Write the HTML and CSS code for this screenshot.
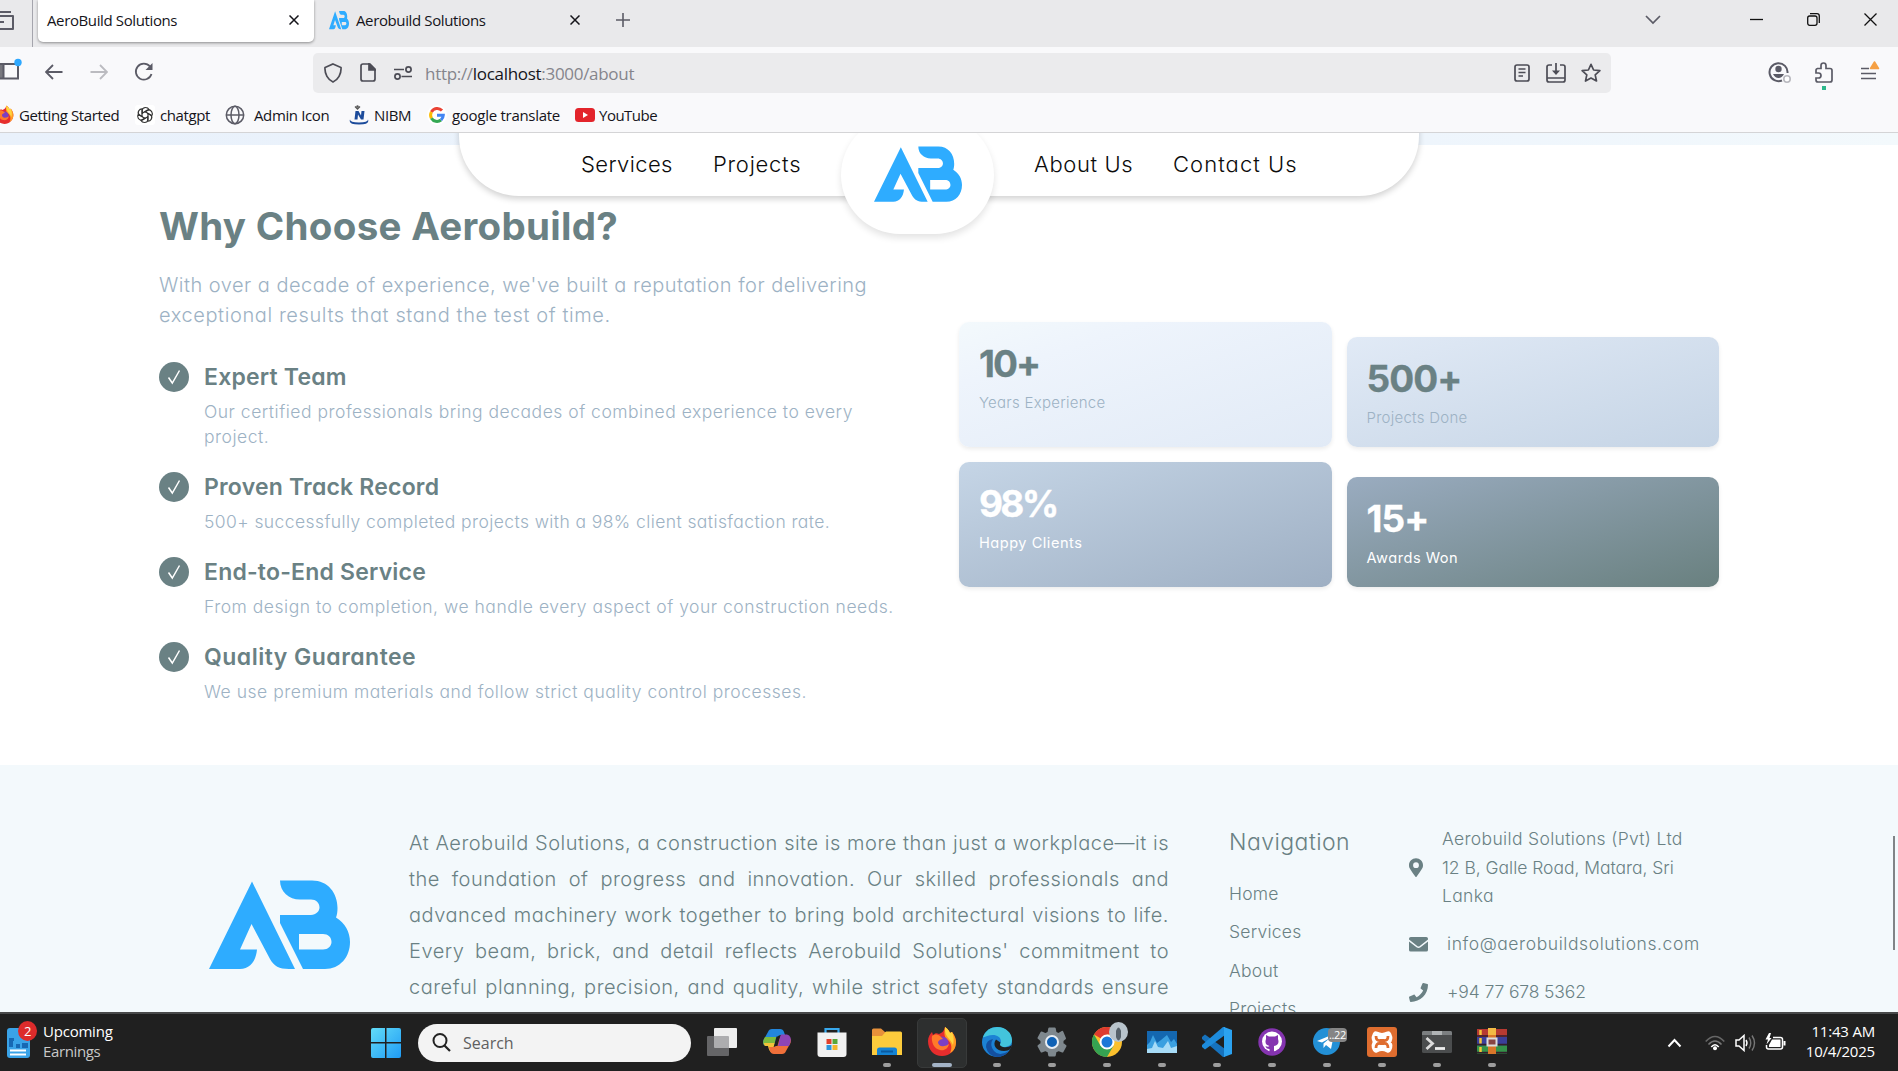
FILE: index.html
```html
<!DOCTYPE html>
<html lang="en">
<head>
<meta charset="utf-8">
<title>AeroBuild Solutions</title>
<link rel="stylesheet" href="styles.css">
</head>
<body>
<svg class="defs" aria-hidden="true">
  <symbol id="logo" viewBox="0 0 141 89"><path fill="#2eacff" fill-rule="evenodd" d="M43 1.5 86 89H80C70 89 65 86 61 79L42.5 44 31 69.5H48C47 81 41 89 31 89H0ZM71 .5H103C119 .5 128.5 13 128.5 28 128.5 32 128 35 127 37.5 136 43 141 52 141 62 141 77 131 89 116 89H94L71 43V35H102C107 35 110.500 31 110.500 27.500 110.500 23 107 19.500 102 19.500H91C80 19.500 71 12 71 .5ZM90 54V69.500H114C119 69.500 122.500 66 122.500 62 122.500 57 119 54 114 54Z"/></symbol>
  <symbol id="check" viewBox="0 0 30 30"><path d="M9.500 15.500 13.300 21 20.500 8.500" fill="none" stroke="#fff" stroke-width="1.500"/></symbol>
  <symbol id="firefox" viewBox="0 0 30 30">
    <path fill="#e62d2d" d="M1 14C1 10 3 7 5 5l1 3C8 6 10 6 12 7c3-1 5-3 6-7 3 2 4 4 5 6l2-1c3 4 4 7 4 10 0 8-6 14-14 14S1 23 1 14Z"/>
    <path fill="#ff9b24" d="M18 0c3 2 4 4 5 6l2-1c3 4 4 7 4 10 0 5-2 9-6 11 2-4 2-8-1-12-3-3-6-4-4-14Z"/>
    <path fill="#ffd53f" d="M18 0c3 2 4 4 5 6l2-1c2 4 2 9 1 13-2-6-9-8-8-18Z"/>
    <circle cx="15" cy="16" r="6.500" fill="#7c3fc2"/>
    <path fill="#ff7a2a" d="M5 9c3-2 5-2 8 0l3 3c-2 0-4 1-5 3 0 3 3 5 6 4 2 0 3-1 5-2-1 5-5 7-9 6-6-1-9-8-8-14Z"/>
  </symbol>
</svg>

<header class="browser">
  <div class="tabs">
    <span class="recent"><svg width="15" height="22" viewBox="0 0 15 22"><path d="M0 3H12M0 7H14V20H0M0 13H5" fill="none" stroke="#5b5b66" stroke-width="2" stroke-linejoin="round"/></svg></span>
    <div class="tab active"><span>AeroBuild Solutions</span><svg class="x" viewBox="0 0 10 10"><path d="M.5.5 9.500 9.500M9.500.5.5 9.500"/></svg></div>
    <div class="tab"><svg class="fav"><use href="#logo"/></svg><span>Aerobuild Solutions</span><svg class="x" viewBox="0 0 10 10"><path d="M.5.5 9.500 9.500M9.500.5.5 9.500"/></svg></div>
    <svg class="plus" width="14" height="14"><path d="M7 0V14M0 7H14" stroke="#5b5b66" stroke-width="1.600"/></svg>
    <div class="winctl">
      <svg width="16" height="10" viewBox="0 0 16 10"><path d="M1 1 8 8 15 1" fill="none" stroke="#5b5b66" stroke-width="1.700"/></svg>
      <svg width="13" height="13"><path d="M0 6.500H13" stroke="#111" stroke-width="1.300"/></svg>
      <svg width="13" height="13"><path d="M3 .7H10Q12.300.7 12.300 3V10" fill="none" stroke="#111" stroke-width="1.300"/><rect x=".7" y="3" width="9.300" height="9.300" rx="2" fill="none" stroke="#111" stroke-width="1.300"/></svg>
      <svg width="13" height="13"><path d="M.5.5 12.500 12.500M12.500.5.5 12.500" stroke="#111" stroke-width="1.300"/></svg>
    </div>
  </div>

  <div class="toolbar">
    <svg class="side" width="22" height="24" viewBox="0 0 22 24"><path d="M0 6H3.500V21H0Z" fill="#77777e"/><path d="M0 6H18V20.500H0M3.500 6V20" fill="none" stroke="#5b5b66" stroke-width="2"/><circle cx="18" cy="4.500" r="3.700" fill="#2ea8ff"/></svg>
    <svg class="back" width="18" height="16" viewBox="0 0 18 16"><path d="M17.500 8H1.500M8 1 1 8 8 15" fill="none" stroke="#5b5b66" stroke-width="1.800"/></svg>
    <svg class="fwd" width="18" height="16" viewBox="0 0 18 16"><path d="M.5 8H16.500M10 1 17 8 10 15" fill="none" stroke="#bbbbc0" stroke-width="1.800"/></svg>
    <svg class="reload" width="20" height="20" viewBox="0 0 20 20"><path d="M17.500 12A8 8 0 1 1 16 4.500" fill="none" stroke="#5b5b66" stroke-width="1.800"/><path d="M18.500 1V8H11.500Z" fill="#5b5b66"/></svg>
    <div class="urlbar">
      <svg class="shield" width="18" height="20" viewBox="0 0 18 20"><path d="M9 1 17 4.500C17.500 11 14 17 9 19 4 17 .5 11 1 4.500Z"/></svg>
      <svg class="page" width="16" height="19" viewBox="0 0 16 19"><path d="M3 1H10L15 6V16Q15 18 13 18H3Q1 18 1 16V3Q1 1 3 1Z"/><path d="M9 1V7H15Z" fill="#4c4c55"/></svg>
      <svg class="perm" width="18" height="14" viewBox="0 0 18 14"><path d="M0 3.500H10M7.500 10.500H18"/><circle cx="14.500" cy="3.500" r="2.600"/><circle cx="3.500" cy="10.500" r="2.600"/></svg>
      <span class="url">http://<b>localhost</b>:3000/about</span>
      <svg class="reader" width="16" height="18" viewBox="0 0 16 18"><rect x="1" y="1" width="14" height="16" rx="2"/><path d="M4.500 5H11.500M4.500 8.500H11.500M4.500 12H9"/></svg>
      <svg class="save" width="20" height="20" viewBox="0 0 20 20"><path d="M6 2H3Q1 2 1 4V17Q1 19 3 19H17Q19 19 19 17V4Q19 2 17 2H14M1 15H19M10 0V10"/><path d="M6 7.500 10 12 14 7.500Z" fill="#4c4c55" stroke="none"/></svg>
      <svg class="star" width="20" height="20" viewBox="0 0 20 20"><path d="M10 1.300 12.600 7 18.900 7.700 14.200 11.800 15.500 18 10 15 4.500 18 5.800 11.800 1.100 7.700 7.400 7Z" stroke-linejoin="round"/></svg>
    </div>
    <svg class="acct" width="24" height="22" viewBox="0 0 24 22"><path d="M19.500 12A9 9 0 1 0 14 19.500" fill="none" stroke="#5b5b66" stroke-width="2"/><circle cx="10.500" cy="8" r="3.200" fill="#5b5b66"/><path d="M5 13H16Q14 17 10.500 17T5 13Z" fill="#5b5b66"/><circle cx="19" cy="18" r="3.200" fill="#fff" stroke="#b9b9bf" stroke-width="1.600"/></svg>
    <svg class="ext" width="18" height="28" viewBox="0 0 18 28"><path d="M2 6.500H6V3.500Q6 1 8.500 1T11 3.500V6.500H15Q17 6.500 17 8.500V18Q17 20 15 20H3Q1 20 1 18V16H3.500Q6 16 6 13.500T3.500 11H1V8.500Q1 6.500 3 6.500Z" fill="none" stroke="#5b5b66" stroke-width="1.700"/><rect x="7" y="24" width="4" height="4" fill="#2fb88c"/></svg>
    <svg class="menu" width="20" height="20" viewBox="0 0 20 20"><path d="M1 7.500H9M1 12.500H16M1 17.500H16" stroke="#5b5b66" stroke-width="1.600"/><path d="M14.500 1 18.500 7.500H10.500Z" fill="#f5a044" stroke="#f5a044" stroke-width="1.500" stroke-linejoin="round"/></svg>
  </div>

  <nav class="bookmarks">
    <svg class="bi b1" viewBox="8 0 22 30"><use href="#firefox" width="30" height="30"/></svg><span class="t1">Getting Started</span>
    <svg class="bi b2" viewBox="0 0 20 20"><rect width="20" height="20" rx="3" fill="#fff"/><g fill="none" stroke="#333" stroke-width="1.200"><path id="petal" d="M7 11.500V5.500Q7.500 2.500 10.500 2.500 13 2.500 14 4.500L9.500 7.200"/><use href="#petal" transform="rotate(60 10 10)"/><use href="#petal" transform="rotate(120 10 10)"/><use href="#petal" transform="rotate(180 10 10)"/><use href="#petal" transform="rotate(240 10 10)"/><use href="#petal" transform="rotate(300 10 10)"/></g></svg><span class="t2">chatgpt</span>
    <svg class="bi b3" viewBox="0 0 20 20"><g fill="none" stroke="#5b5b66" stroke-width="1.500"><circle cx="10" cy="10" r="8.700"/><ellipse cx="10" cy="10" rx="4" ry="8.700"/><path d="M1 10H19"/></g></svg><span class="t3">Admin Icon</span>
    <svg class="bi b4" viewBox="0 0 20 20"><path d="M5.500 14.500 6.500 6H9.500L12 10.500 12.500 6H15.500L14.500 14.500H12L9 9.500 8.500 14.500Z" fill="#1c4b9b"/><path d="M1 14.500Q-1 19.500 10 19.500T19 14.500Q19 17.500 10 17.500T1 14.500Z" fill="#1c4b9b"/><path d="M6 1.500 8.500 4 11 1.500" fill="none" stroke="#555" stroke-width="1.300"/><circle cx="8.500" cy="1.500" r="1.200" fill="#555"/></svg><span class="t4">NIBM</span>
    <svg class="bi b5" viewBox="0 0 20 20"><circle cx="10" cy="10" r="10" fill="#fff"/><g fill="none" stroke-width="3"><path d="M15 5.500A6.500 6.500 0 0 0 4.400 7" stroke="#ea4335"/><path d="M4.400 7A6.500 6.500 0 0 0 4.400 13.200" stroke="#fbbc05"/><path d="M4.400 13.200A6.500 6.500 0 0 0 14 15" stroke="#34a853"/><path d="M14 15A6.500 6.500 0 0 0 16.300 10.300H10" stroke="#4285f4"/></g></svg><span class="t5">google translate</span>
    <svg class="bi b6" viewBox="0 0 20 20"><rect y="3" width="20" height="14" rx="3.500" fill="#e3242b"/><path d="M8 7V13L13 10Z" fill="#fff"/></svg><span class="t6">YouTube</span>
  </nav>
</header>

<main class="viewport">
  <div class="sitenav">
    <div class="bar"><a class="n1">Services</a><a class="n2">Projects</a><a class="n3">About Us</a><a class="n4">Contact Us</a></div>
    <div class="badge"><svg width="88" height="56"><use href="#logo"/></svg></div>
  </div>
  <div class="scroll"></div>
  <div class="strip"></div>

  <section class="why">
    <div class="left">
      <h2>Why Choose Aerobuild?</h2>
      <p class="lead">With over a decade of experience, we've built a reputation for delivering<br><span>exceptional results that stand the test of time.</span></p>
      <ul>
        <li><svg><use href="#check"/></svg><div><h3>Expert Team</h3><p>Our certified professionals bring decades of combined experience to every<br>project.</p></div></li>
        <li><svg><use href="#check"/></svg><div><h3>Proven Track Record</h3><p class="p2">500+ successfully completed projects with a 98% client satisfaction rate.</p></div></li>
        <li><svg><use href="#check"/></svg><div><h3>End-to-End Service</h3><p>From design to completion, we handle every aspect of your construction needs.</p></div></li>
        <li><svg><use href="#check"/></svg><div><h3 class="h4">Quality Guarantee</h3><p class="p4">We use premium materials and follow strict quality control processes.</p></div></li>
      </ul>
    </div>
    <div class="stats">
      <div class="stat s1"><strong>10+</strong><span>Years Experience</span></div>
      <div class="stat s2"><strong>500+</strong><span>Projects Done</span></div>
      <div class="stat s3"><strong>98%</strong><span>Happy Clients</span></div>
      <div class="stat s4"><strong>15+</strong><span>Awards Won</span></div>
    </div>
  </section>

  <footer>
    <svg class="flogo" width="141" height="89"><use href="#logo"/></svg>
    <p class="about">At Aerobuild Solutions, a construction site is more than just a workplace—it is<br>the foundation of progress and innovation. Our skilled professionals and<br>advanced machinery work together to bring bold architectural visions to life.<br>Every beam, brick, and detail reflects Aerobuild Solutions' commitment to<br>careful planning, precision, and quality, while strict safety standards ensure</p>
    <div class="links"><h4>Navigation</h4><a>Home</a><a>Services</a><a>About</a><a>Projects</a></div>
    <div class="contact">
      <div class="row addr"><svg width="14" height="19" viewBox="0 0 384 512"><path d="M172.300 501.700C27 291 0 269.400 0 192 0 86 86 0 192 0s192 86 192 192c0 77.400-27 99-172.300 309.700a24 24 0 0 1-39.400 0ZM192 272a80 80 0 1 0 0-160 80 80 0 0 0 0 160Z"/></svg><span>Aerobuild Solutions (Pvt) Ltd<br><em>12 B, Galle Road, Matara, Sri</em><br>Lanka</span></div>
      <div class="row mail"><svg width="19" height="15" viewBox="0 0 19 15"><path d="M1.800 0H17.200Q19 0 19 1.800V2.500L10.800 9Q9.500 10 8.200 9L0 2.500V1.800Q0 0 1.800 0ZM0 4.500 7.500 10.300Q9.500 11.800 11.500 10.300L19 4.500V13Q19 14.500 17.200 14.500H1.800Q0 14.500 0 13Z"/></svg><span>info@aerobuildsolutions.com</span></div>
      <div class="row tel"><svg width="19" height="19" viewBox="0 0 512 512"><path d="m493.400 24.600-104-24c-11.300-2.600-22.900 3.300-27.500 13.900l-48 112c-4.200 9.800-1.400 21.300 6.900 28l60.600 49.600c-36 76.700-98.900 140.500-177.200 177.200l-49.600-60.600c-6.800-8.300-18.200-11.100-28-6.900l-112 48C3.900 366.500-2 378.100.6 389.400l24 104C27.100 504.200 36.700 512 48 512c256.100 0 464-207.500 464-464 0-11.200-7.700-20.900-18.600-23.400Z"/></svg><span>+94 77 678 5362</span></div>
    </div>
  </footer>
</main>

<div class="taskbar">
  <div class="widget">
    <svg width="24" height="38" viewBox="0 0 24 38"><rect y="4" width="23" height="30" rx="3" fill="#3aa3e8"/><path d="M2 17h4v6H2Zm7 3h4v4H9Zm6-1h6v5h-6ZM2 14h5v3H2Z" fill="#1768b3"/><path d="M3 26.500H19M3 30.500H19" stroke="#fff" stroke-width="2.200"/></svg>
    <i>2</i>
    <div><b>Upcoming</b><span>Earnings</span></div>
  </div>
  <svg class="win" width="30" height="30" viewBox="0 0 30 30"><defs><linearGradient id="w" x2="1" y2="1"><stop stop-color="#62dcf8"/><stop offset="1" stop-color="#1f9bf5"/></linearGradient></defs><path fill="url(#w)" d="M2 0H14V14H0V2Q0 0 2 0ZM15.500 0H28Q30 0 30 2V14H15.500ZM0 15.500H14V30H2Q0 30 0 28ZM15.500 15.500H30V28Q30 30 28 30H15.500Z"/></svg>
  <div class="search"><svg width="19" height="19" viewBox="0 0 19 19"><circle cx="8" cy="7.500" r="6.500" fill="none" stroke="#222" stroke-width="2"/><path d="M12.500 12.500 18 18" stroke="#222" stroke-width="2.200"/></svg><span>Search</span></div>

  <div class="apps">
    <div class="app"><svg viewBox="0 0 30 30"><rect x="7" y="1" width="23" height="20" rx="1" fill="#eee"/><rect y="9" width="22" height="20" rx="1" fill="#8a8a8e" fill-opacity=".65"/></svg></div>
    <div class="app"><svg viewBox="0 0 30 30"><path d="M6 5Q7 2 10 2H18Q21 2 22 5L23 8H19Q16 8 15 11L12 19H4Q0 18 1.500 13Z" fill="#2386dc"/><path d="M3 10H14.500L12 19H4Q0 18 1.500 13Z" fill="#7cbb3e"/><path d="M2 16H13L12 19 9 25Q7 24 6 19H4Q2 19 2 16Z" fill="#f2c23a"/><path d="M24 24Q23 27 20 27H12Q9 27 8 24L7 20H11Q14 20 15 17L18 10H26Q30 11 28.500 16Z" fill="#f0703a"/><path d="M18 10 19 7.500H25Q30 9 28.500 15L27 19H16Z" fill="#8d45b5"/><path d="M14.500 9.500H18L15.500 19H12Z" fill="#202020"/></svg></div>
    <div class="app"><svg viewBox="0 0 30 30"><path d="M8.500 6V2H21.500V6" fill="none" stroke="#38a9ee" stroke-width="2.200"/><path d="M.5 5.500H29.500V27Q29.500 30 26.500 30H3.500Q.5 30 .5 27Z" fill="#f1f1f1"/><path d="M9.500 12H14.500V17H9.500Z" fill="#e2412c"/><path d="M15.500 12H20.500V17H15.500Z" fill="#58a83a"/><path d="M9.500 18H14.500V23H9.500Z" fill="#2c96dd"/><path d="M15.500 18H20.500V23H15.500Z" fill="#f5b62b"/></svg></div>
    <div class="app run"><svg viewBox="0 0 30 30"><path d="M0 3Q0 1.500 1.500 1.500H9L13 5H17V10H0Z" fill="#e8913a"/><path d="M0 9H10L14 4.500H28.500Q30 4.500 30 6V28H0Z" fill="#fccb3c"/><path d="M5 28V23Q5 20.500 7.500 20.500H22.500Q25 20.500 25 23V28Z" fill="#1583d4"/><path d="M9 24.500H21" stroke="#0b5aa0" stroke-width="2"/></svg></div>
    <div class="app run on"><svg viewBox="0 0 30 30"><use href="#firefox"/></svg></div>
    <div class="app run"><svg viewBox="0 0 30 30"><circle cx="15" cy="15" r="15" fill="#1c82d4"/><path d="M1 10Q5 0 15 0C24 0 30 6 30 13 30 18 26 20 22 20 18 20 17 18 19 15 19 10 15 8 11 8 6 8 2 11 1 10Z" fill="#43c4dc"/><path d="M11 12Q7 18 12 24 17 30 27 24 22 30 15 30 6 29 4 20 4 13 11 12Z" fill="#1450a0"/><path d="M14 12.500C10 18 14 24 22 24 25 24 27 23 28.500 22L30 18Q26 21 21 20C17 19 18 17 18.500 15.500Z" fill="#202020"/></svg></div>
    <div class="app run"><svg viewBox="0 0 30 30"><path fill="#7f888e" stroke="#7f888e" stroke-width="2" stroke-linejoin="round" d="M12.300 1.500H17.700L18.500 5.500 21.500 7.200 25.300 4.900 28 11.500 25.500 13.500V16.500L28.500 19 25.500 24.500 21.500 23 18.500 24.500 17.700 28.500H12.300L11.500 24.500 8.500 23 4.500 24.500 1.500 19 4.500 16.500V13.500L1.500 11 4.500 5.500 8.500 7.200 11.500 5.500Z"/><circle cx="15" cy="15" r="6" fill="#0f61b5" stroke="#e8eef4" stroke-width="2"/></svg></div>
    <div class="app run chrome"><svg viewBox="0 0 30 30"><circle cx="15" cy="15" r="15" fill="#fbc02d"/><path d="M15 15 2 7.500A15 15 0 0 1 28 7.500H15Z" fill="#df3b2f"/><path d="M2 7.500A15 15 0 0 0 15 30L21.500 18.700 8.500 18.700Z" fill="#35a352"/><circle cx="15" cy="15" r="6.500" fill="#1c78d8" stroke="#fff" stroke-width="2"/></svg><i></i></div>
    <div class="app run"><svg viewBox="0 0 30 30"><path d="M0 4H30V26H0Z" fill="#1467b0"/><path d="M0 18 3 15 6 8 10 16 14 13 20 8 24 15 27 12 30 17V26H0Z" fill="#3ba0e0"/><path d="M0 22 5 21 8 14 11 20 16 21 21 14 24 21 30 19V26H0Z" fill="#a8dcf7"/></svg></div>
    <div class="app run"><svg viewBox="0 0 30 30"><path d="M0 10 3 7.500 23 22V30H21L0 12Z" fill="#1672bd"/><path d="M0 20 3 22.500 23 8V0H21L0 18Z" fill="#1d8bdb"/><path d="M22 0 30 3V27L22 30Z" fill="#2ba2f0"/></svg></div>
    <div class="app run"><svg viewBox="0 0 30 30"><circle cx="15" cy="15" r="13.700" fill="#8534b0"/><circle cx="15" cy="14.500" r="10" fill="#fff"/><path d="M9 8 12 9.500H18L21 8V12Q23 18 17 19V25H12.500V22Q9 22 8.500 19 11 20.500 12.500 19 7 18 9 12Z" fill="#8534b0"/></svg></div>
    <div class="app run tele"><svg viewBox="0 0 30 30"><circle cx="14.500" cy="14.500" r="13.500" fill="#2390d6"/><path d="M5 14 22 7 19 22 14 18 11.500 21V16.500L18 11 10 15.500Z" fill="#fff"/></svg><i>..22</i></div>
    <div class="app run"><svg viewBox="0 0 30 30"><rect width="30" height="30" rx="3" fill="#df6d2f"/><path d="M9 8Q15 11 21 8 23 12 20 15 23 18 21 22 15 19 9 22 7 18 10 15 7 12 9 8Z" fill="none" stroke="#fff" stroke-width="7" stroke-linejoin="round"/><path d="M9 9Q9 14 13 13.500H17Q21 14 21 9M9 21Q9 16 13 16.500H17Q21 16 21 21" fill="none" stroke="#df6d2f" stroke-width="2.800"/></svg></div>
    <div class="app run"><svg viewBox="0 0 30 30"><rect y="4" width="30" height="22" rx="1.500" fill="#4b4d4e"/><path d="M0 5.500Q0 4 1.500 4H28.500Q30 4 30 5.500V8H0Z" fill="#7c7f81"/><path d="M10 4H20V8H10Z" fill="#b0b3b5"/><path d="M4.500 11 10.500 16.500 4.500 22" fill="none" stroke="#ddd" stroke-width="2.800"/><path d="M13 21.500H23" stroke="#eee" stroke-width="2.800"/></svg></div>
    <div class="app run"><svg viewBox="0 0 30 30"><path d="M0 2H30V10H0Z" fill="#b63a32"/><path d="M0 10H30V18.500H0Z" fill="#3b3f9a"/><path d="M0 18.500H30V26.500H0Z" fill="#35934a"/><path d="M0 9H30M0 17.500H30M0 25.500H30" stroke="#331e2c" stroke-width="1.500"/><path d="M3.500 3V8M3.500 11V16.500M3.500 20V25" stroke="#f4c53b" stroke-width="2.500"/><path d="M11 1H19V27H11Z" fill="#d9772a"/><path d="M11 1H19V8H11Z" fill="#f2ba45"/><rect x="10.500" y="11.500" width="9" height="7" fill="#844" stroke="#ddd" stroke-width="2"/></svg></div>
  </div>

  <div class="tray">
    <svg class="chev" width="15" height="10" viewBox="0 0 15 10"><path d="M1.500 8.500 7.500 2 13.500 8.500" fill="none" stroke="#fff" stroke-width="2"/></svg>
    <svg class="wifi" width="20" height="16" viewBox="0 0 20 16"><g fill="none" stroke-width="1.600"><path d="M.7 6.500Q10-3.500 19.300 6.500" stroke="#666"/><path d="M3.500 9.500Q10 2.500 16.500 9.500" stroke="#777"/><path d="M6.300 12Q10 7.500 13.700 12" stroke="#fff"/></g><circle cx="10" cy="13.300" r="2" fill="#fff"/></svg>
    <svg class="vol" width="21" height="18" viewBox="0 0 21 18"><path d="M1 6H4L9 1.500V16.500L4 12H1Z" fill="none" stroke="#fff" stroke-width="1.500"/><path d="M11 6Q13 9 11 12" fill="none" stroke="#fff" stroke-width="1.400"/><path d="M14 3.500Q17.500 9 14 14.500M17 1.500Q22 9 17 16.500" fill="none" stroke="#777" stroke-width="1.400"/></svg>
    <svg class="bat" width="21" height="18" viewBox="0 0 21 18"><path d="M8 4.500H15.500Q17.500 4.500 17.500 6.500V14Q17.500 16 15.500 16H3.500Q1.500 16 1.500 14V12" fill="none" stroke="#fff" stroke-width="1.500"/><path d="M7 6.500H15.500V14H4V12ZM18.500 8H20.500V12.500H18.500Z" fill="#fff"/><path d="M4 0 .5 6.500H3L1.500 11.500 6.500 5H4.500L6 0Z" fill="#fff"/></svg>
    <div class="clock"><span>11:43 AM</span><span>10/4/2025</span></div>
  </div>
</div>
</body>
</html>
```
FILE: styles.css
```css
* { box-sizing: border-box; }
body, h2, h3, h4, p, ul { margin: 0; padding: 0; }
body {
  width: 1898px; height: 1071px; overflow: hidden;
  display: flex; flex-direction: column;
  background: #fff;
  font-family: Inter, "Noto Sans", sans-serif;
  font-weight: 300;
  font-feature-settings: "cv11";
}
svg { display: block; flex: none; }
.defs { position: absolute; width: 0; height: 0; }
em, i { font-style: normal; }

/* Browser chrome */
.browser, .taskbar { font-family: "Open Sans", "Noto Sans", sans-serif; font-weight: 400; letter-spacing: -.38px; white-space: nowrap; }
.browser { position: relative; z-index: 5; height: 133px; background: #f9f9fb; border-bottom: 1px solid #d4d4d6; font-size: 15px; color: #15141a; flex: none; }
.tabs { height: 47px; background: #e9e9eb; display: flex; align-items: flex-start; }
.recent { width: 33px; height: 47px; padding-top: 9px; border-right: 1px solid #a5a5ad; }
.recent svg { margin-left: -1px; }
.tab { display: flex; align-items: center; height: 42px; width: 283px; }
.tab.active { margin-left: 5px; width: 276px; padding-left: 9px; background: #fff; border-radius: 0 0 5px 5px; box-shadow: 0 1px 3px rgba(0,0,0,.4); }
.tab span { flex: 1; margin-top: -2px; }
.tab:not(.active) { padding-left: 15px; }
.tab .x { width: 10px; height: 10px; margin: -3px 15px 0 0; stroke: #15141a; stroke-width: 1.5; }
.tab:not(.active) .x { margin-right: 17px; }
.fav { width: 20px; height: 20px; margin: -2px 7px 0 0; transform: scaleY(1.45); }
.plus { margin: 13px 0 0 19px; }
.winctl { margin-left: auto; display: flex; align-items: center; height: 39px; padding-right: 21px; }
.winctl svg + svg { margin-left: 44px; }
.winctl svg:nth-child(2) { margin-left: 89px; }
.toolbar { height: 50px; display: flex; align-items: center; }
.side { margin: -4px 0 0 0; }
.back { margin-left: 23px; }
.fwd { margin-left: 27px; }
.reload { margin-left: 26px; }
.urlbar { display: flex; align-items: center; width: 1298px; height: 40px; margin: 1px 0 0 159px; background: #ebebed; border-radius: 5px; }
.urlbar svg { fill: none; stroke: #4c4c55; stroke-width: 1.7; }
.shield { margin-left: 11px; }
.page { margin-left: 18px; }
.perm { margin-left: 18px; }
.url { margin: 2px 0 0 13px; font-size: 17px; letter-spacing: -.3px; color: #85858c; flex: 1; }
.url b { font-weight: 400; color: #15141a; }
.save { margin-left: 16px; }
.star { margin: 0 10px 0 15px; }
.acct { margin-left: 157px; }
.ext { margin: 7px 0 0 23px; }
.menu { margin: -3px 0 0 27px; }
.bookmarks { height: 34px; display: flex; align-items: center; margin-top: 1px; }
.bi { width: 20px; height: 20px; }
.b1 { width: 14px; }
.t1 { width: 120px; padding-left: 5px; margin-right: 1px; }
.t2 { width: 71px; padding-left: 5px; }
.b3 { margin-left: -1px; }
.t3 { width: 103px; padding-left: 9px; }
.t4 { width: 59px; padding-left: 5px; }
.b4 { margin-left: 1px; }
.b5 { margin-left: -1px; }
.t5 { width: 128px; padding-left: 5px; letter-spacing: -.28px; }
.t6 { padding-left: 4px; letter-spacing: -.5px; }

/* Page viewport */
.viewport { position: relative; height: 879px; overflow: hidden; flex: none; color: #6a8184; }
.sitenav { position: absolute; z-index: 2; left: 459px; top: -17px; width: 960px; height: 118px; }
.bar { height: 80px; background: #fff; border-radius: 0 0 60px 60px; box-shadow: 0 3px 6px rgba(0,0,0,.18); display: flex; padding: 32px 0 0 122px; color: #0b0b0b; font-size: 22px; line-height: 32px; white-space: nowrap; }
.n1 { width: 132px; letter-spacing: .4px; }
.n2 { width: 321px; letter-spacing: .75px; }
.n3 { width: 139px; letter-spacing: .6px; }
.n4 { letter-spacing: 1.050px; }
.badge { position: absolute; left: 382px; top: 0; width: 153px; height: 118px; border-radius: 60px; background: #fff; box-shadow: 0 4px 7px rgba(0,0,0,.11); display: flex; justify-content: center; padding-top: 30px; }
.scroll { position: absolute; right: 3px; top: 703px; width: 2px; height: 114px; background: #808487; z-index: 3; }
.strip { height: 12px; background: linear-gradient(90deg, #e9f1fb, #eef5fc 75%, #f3f9fc); }
.why { height: 620px; padding: 57px 0 0 159px; display: grid; grid-template-columns: 760px 760px; gap: 40px; align-items: start; white-space: nowrap; }
h2 { font-size: 38.500px; line-height: 48px; font-weight: 700; letter-spacing: .3px; }
.lead { margin-top: 20px; font-size: 20px; line-height: 30px; letter-spacing: .48px; color: #9db2c4; }
.lead span { letter-spacing: .6px; }
ul { list-style: none; margin-top: 31px; display: flex; flex-direction: column; gap: 22px; }
li { display: flex; gap: 15px; }
li svg { width: 30px; height: 30px; border-radius: 50%; background: #6a8184; margin-top: 1px; }
h3 { font-size: 23px; line-height: 32px; font-weight: 600; letter-spacing: .2px; }
.h4 { letter-spacing: .48px; }
li p { margin-top: 6px; font-size: 17.500px; line-height: 25px; letter-spacing: .51px; color: #9db2c4; }
li .p2 { letter-spacing: .41px; }
li .p4 { letter-spacing: .53px; }
.stats { margin-top: 120px; display: grid; grid-template-columns: 1fr 1fr; grid-auto-rows: 125px; gap: 15px; }
.stat { border-radius: 10px; padding: 20px; box-shadow: 0 2px 4px rgba(0,0,0,.08); display: flex; flex-direction: column; }
.s2, .s4 { margin-top: 15px; }
.stat strong { font-size: 37px; line-height: 44px; font-weight: 700; letter-spacing: -.9px; -webkit-text-stroke: .3px currentColor; }
.stat.s1 strong { letter-spacing: -1.900px; }
.stat.s3 strong { letter-spacing: -2.700px; }
.stat span { margin-top: 6px; font-size: 15px; line-height: 22px; letter-spacing: .26px; }
.s1 { background: linear-gradient(to bottom right, #f3f9fc, #eef4fc 25%, #e1eaf6); }
.s2 { background: linear-gradient(to bottom right, #e1eaf6, #c5d4e5); }
.s3 { background: linear-gradient(to bottom right, #c5d5e6, #9eafc3); color: #fff; }
.s4 { background: linear-gradient(to bottom right, #9aacc0, #69807f); color: #fff; }
.s1 span, .s2 span { color: #9db2c4; }
.s3 span, .s4 span { letter-spacing: .5px; font-weight: 400; font-size: 14.600px; }

footer { height: 247px; background: #f3f9fc; display: flex; align-items: flex-start; white-space: nowrap; }
.flogo { margin: 115px 0 0 209px; }
.about { margin: 60px 0 0 59px; width: 760px; font-size: 20px; line-height: 36px; letter-spacing: .5px; text-align: justify; text-align-last: justify; }
.links { margin: 59px 0 0 60px; width: 180px; display: flex; flex-direction: column; font-size: 17.500px; line-height: 38.400px; letter-spacing: .25px; }
h4 { font-weight: 300; font-size: 23px; line-height: 36px; letter-spacing: .45px; margin-bottom: 15px; }
.contact { margin-top: 60px; font-size: 17.500px; line-height: 28.500px; letter-spacing: .34px; }
.row { display: flex; align-items: center; fill: #6a8184; height: 29px; }
.addr { height: 86px; gap: 19px; }
.addr svg { margin-top: -2px; }
.addr em { letter-spacing: -.03px; }
.mail, .tel { margin-top: 19px; gap: 19px; }
.mail { letter-spacing: .58px; }
.tel { letter-spacing: -.12px; }

/* Taskbar */
.taskbar { height: 59px; background: #202020; border-top: 2px solid #48494a; display: flex; align-items: center; color: #fff; position: relative; flex: none; }
.widget { display: flex; align-items: center; position: relative; padding-left: 7px; width: 371px; font-size: 15px; line-height: 20px; }
.widget i { position: absolute; left: 18px; top: -3px; width: 19px; height: 20px; border-radius: 50%; background: #dc2b2b; font-size: 13px; text-align: center; }
.widget div { margin: -3px 0 0 12px; display: flex; flex-direction: column; }
.widget b { font-weight: 400; letter-spacing: -.22px; }
.widget span { color: #c8c8c8; }
.search { margin-left: 17px; width: 273px; height: 38px; background: #f3f3f3; border-radius: 19px; display: flex; align-items: center; padding-left: 14px; color: #5f5f5f; font-size: 16px; letter-spacing: 0; }
.search span { margin-left: 12px; }
.apps { display: flex; margin-left: 6px; }
.app { width: 50px; height: 50px; margin-right: 5px; border-radius: 5px; display: flex; justify-content: center; padding-top: 9px; position: relative; }
.app svg { width: 30px; height: 30px; }
.app.run::after { content: ""; position: absolute; left: 21px; bottom: 1px; width: 8px; height: 4px; border-radius: 2px; background: #9d9d9d; }
.app.on { background: #2d2f2f; border: 1px solid #383a3a; padding-top: 8px; }
.app.on::after { left: 14px; bottom: 0; width: 20px; background: #a3b3c6; }
.chrome i { position: absolute; left: 27px; top: 4px; width: 19px; height: 20px; border-radius: 50%; background: radial-gradient(ellipse 3px 7px at 50% 60%, #56616a 80%, #b9c4cc); }
.tele i { position: absolute; left: 26px; top: 10px; width: 19px; height: 14px; border-radius: 4px; background: #858585; font-size: 11px; line-height: 13px; text-align: center; }
.tray { display: flex; align-items: center; margin-left: auto; padding-right: 23px; }
.wifi { margin-left: 23px; }
.vol { margin-left: 10px; }
.bat { margin-left: 9px; margin-top: -2px; }
.clock { display: flex; flex-direction: column; margin-top: -3px; text-align: right; font-size: 15px; line-height: 20px; letter-spacing: -.2px; width: 89px; }
```
